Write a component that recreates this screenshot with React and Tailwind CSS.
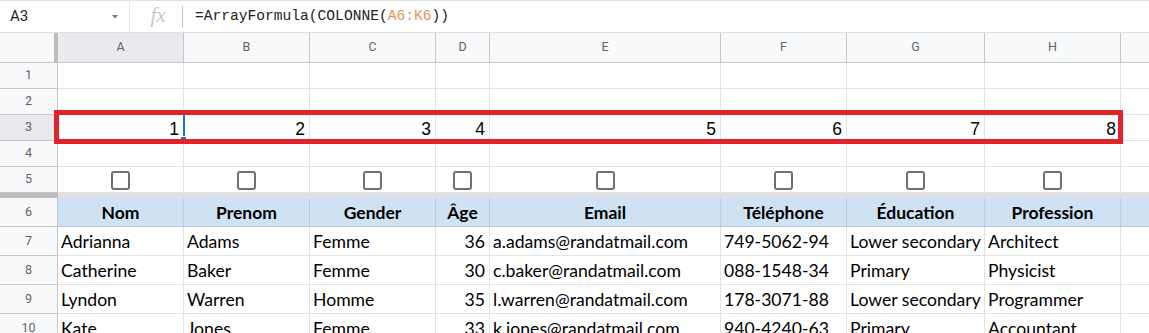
import React from "react";

const W = ["w-[126px]", "w-[126px]", "w-[126px]", "w-[54px]", "w-[231px]", "w-[126px]", "w-[138px]", "w-[136px]"];
const LETTERS = ["A", "B", "C", "D", "E", "F", "G", "H"];
const HEAD = ["Nom", "Prenom", "Gender", "Âge", "Email", "Téléphone", "Éducation", "Profession"];
const DATA = [
  ["Adrianna", "Adams", "Femme", "36", "a.adams@randatmail.com", "749-5062-94", "Lower secondary", "Architect"],
  ["Catherine", "Baker", "Femme", "30", "c.baker@randatmail.com", "088-1548-34", "Primary", "Physicist"],
  ["Lyndon", "Warren", "Homme", "35", "l.warren@randatmail.com", "178-3071-88", "Lower secondary", "Programmer"],
  ["Kate", "Jones", "Femme", "33", "k.jones@randatmail.com", "940-4240-63", "Primary", "Accountant"],
];

const ui = { fontFamily: "Roboto, 'Liberation Sans', Arial, sans-serif" };
const cal = { fontFamily: "Lato, 'Noto Sans', 'Liberation Sans', sans-serif" };
const arial = { fontFamily: "'Liberation Sans', Arial, sans-serif" };
const mono = { fontFamily: "'Liberation Mono', 'DejaVu Sans Mono', monospace" };

function RowHead({ n, hi }) {
  return (
    <div
      className={`w-[58px] shrink-0 border-r border-b border-[#c4c7c5] flex items-center justify-center text-[12.5px] text-[#5f6368] ${hi ? "bg-[#e8eaed]" : "bg-[#f8f9fa]"}`}
      style={ui}
    >
      {n}
    </div>
  );
}

function EmptyRow({ n, hi, children }) {
  return (
    <div className="flex h-[26px]">
      <RowHead n={n} hi={hi} />
      {W.map((w, i) => (
        <div key={i} className={`${w} shrink-0 border-r border-b border-[#e2e3e3] bg-white`}>
          {children ? children(i) : null}
        </div>
      ))}
      <div className="flex-1 border-b border-[#e2e3e3] bg-white" />
    </div>
  );
}

function Checkbox() {
  return <div className="w-[19px] h-[19px] border-2 border-[#707070] rounded-[3px] bg-white" />;
}

export default function App() {
  return (
    <div className="relative w-[1149px] h-[333px] overflow-hidden bg-white">
      {/* formula bar */}
      <div className="flex h-[33px] border-t border-b border-[#e0e0e0] bg-white items-stretch">
        <div className="w-[130px] shrink-0 border-r border-[#e8e8e8] flex items-center justify-between pl-[10px] pr-[11px]">
          <span className="text-[15px] text-[#202124]" style={ui}>A3</span>
          <svg width="6" height="4" viewBox="0 0 6 4"><path d="M0 0h6L3 3.5z" fill="#757575" /></svg>
        </div>
        <div className="w-[52px] shrink-0 flex items-center justify-center">
          <span className="text-[21px] italic text-[#c6c6c6] leading-none pb-[2px] pl-[4px]" style={{ fontFamily: "'Liberation Serif', 'DejaVu Serif', serif" }}>fx</span>
        </div>
        <div className="flex items-center">
          <div className="w-px h-[22px] bg-[#c4c4c4]" />
        </div>
        <div className="flex items-center pl-[12px] text-[14.6px] text-[#202124] pt-[1px]" style={mono}>
          =ArrayFormula(COLONNE(<span className="text-[#e0955b]">A6:K6</span>))
        </div>
      </div>

      {/* column headers */}
      <div className="flex h-[30px]">
        <div className="w-[58px] shrink-0 bg-[#f8f9fa] border-b border-[#c4c7c5] flex justify-end">
          <div className="w-[4px] h-full bg-[#bdbdbd]" />
        </div>
        {W.map((w, i) => (
          <div
            key={i}
            className={`${w} shrink-0 border-r border-b border-[#c4c7c5] flex items-center justify-center text-[12.5px] text-[#5f6368] ${i === 0 ? "bg-[#e8eaed]" : "bg-[#f8f9fa]"}`}
            style={ui}
          >
            {LETTERS[i]}
          </div>
        ))}
        <div className="flex-1 bg-[#f8f9fa] border-b border-[#c4c7c5]" />
      </div>

      <EmptyRow n="1" />
      <EmptyRow n="2" />
      <EmptyRow n="3" hi>
        {(i) => (
          <div className="h-full flex items-end justify-end pr-[4px] pb-0 text-[17.5px] text-black leading-[22px]" style={arial}>
            {i + 1}
          </div>
        )}
      </EmptyRow>
      <EmptyRow n="4" />
      <EmptyRow n="5">
        {() => (
          <div className="h-full flex items-center justify-center pt-[1px]">
            <Checkbox />
          </div>
        )}
      </EmptyRow>

      {/* freeze bar */}
      <div className="flex h-[5px]">
        <div className="w-[58px] shrink-0 bg-[#bdbdbd]" />
        <div className="flex-1 bg-[#dde1e6]" />
      </div>

      {/* header row 6 */}
      <div className="flex h-[29px]">
        <RowHead n="6" />
        {W.map((w, i) => (
          <div
            key={i}
            className={`${w} shrink-0 border-r border-b border-[#bcccdc] bg-[#cfe2f3] flex items-end justify-center pb-[2px] text-[17.5px] font-bold text-black leading-[22px]`}
            style={cal}
          >
            {HEAD[i]}
          </div>
        ))}
        <div className="flex-1 border-b border-[#bcccdc] bg-[#cfe2f3]" />
      </div>

      {DATA.map((row, r) => (
        <div key={r} className="flex h-[29px]">
          <RowHead n={String(7 + r)} />
          {W.map((w, i) => (
            <div
              key={i}
              className={`${w} shrink-0 border-r border-b border-[#e2e3e3] flex items-end pb-[2px] text-[17.6px] text-black leading-[22px] whitespace-nowrap overflow-hidden ${i === 3 ? "justify-end pr-[4px]" : "justify-start pl-[3px]"}`}
              style={cal}
            >
              {row[i]}
            </div>
          ))}
          <div className="flex-1 border-b border-[#e2e3e3]" />
        </div>
      ))}

      {/* selection of A3 */}
      <div className="absolute left-[57px] top-[113px] w-[128px] h-[28px] border-2 border-[#1a73e8]" />
      <div className="absolute left-[180px] top-[136px] w-[7px] h-[7px] bg-[#1a73e8] border border-white" />

      {/* red highlight box */}
      <div className="absolute left-[54px] top-[110px] w-[1069px] h-[34px] border-[5px] border-[#e2232a]" />
    </div>
  );
}
